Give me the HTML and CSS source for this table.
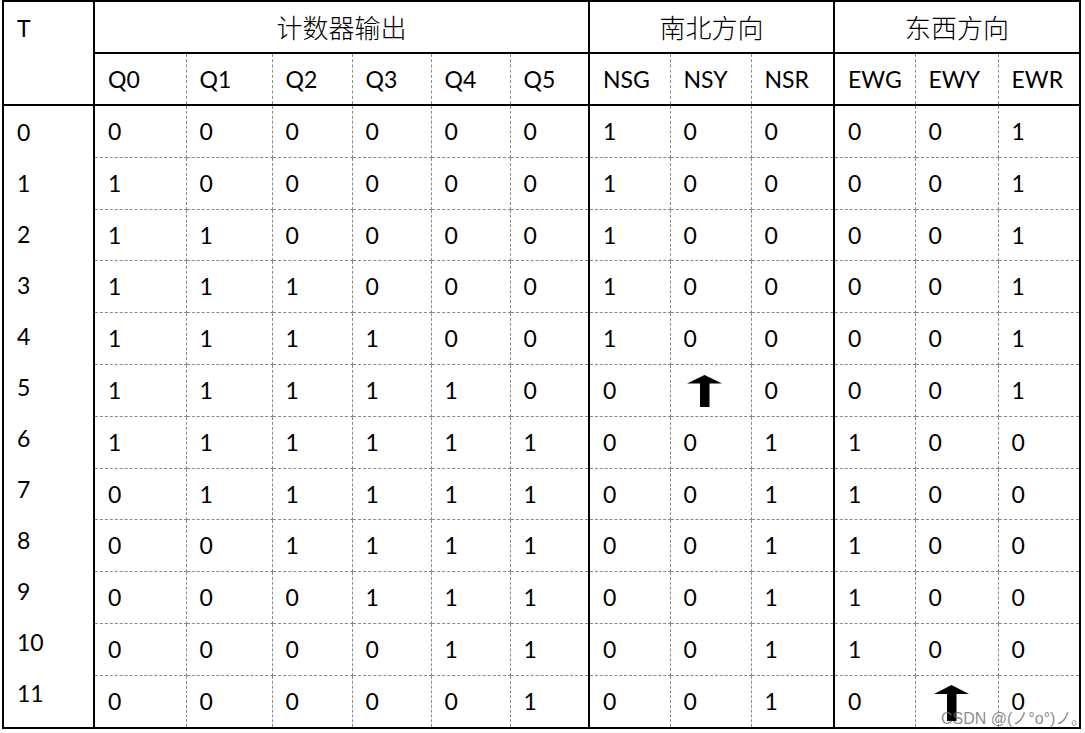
FILE: index.html
```html
<!DOCTYPE html>
<html lang="zh-CN">
<head>
<meta charset="utf-8">
<title>交通灯状态表</title>
<link rel="stylesheet" href="styles.css">
</head>
<body>
<div class="page">
<table class="tt">
  <colgroup>
    <col class="w91"><col class="w92"><col class="w86"><col class="w80"><col class="w79"><col class="w79"><col class="w79">
    <col class="w81"><col class="w81"><col class="w83"><col class="w81"><col class="w83"><col class="w82">
  </colgroup>
  <thead>
    <tr class="h1">
      <th class="tcol thead-t" rowspan="2">T</th>
      <th class="grp" colspan="6">计数器输出</th>
      <th class="grp gs" colspan="3">南北方向</th>
      <th class="grp gs" colspan="3">东西方向</th>
    </tr>
    <tr class="h2">
      <th>Q0</th><th>Q1</th><th>Q2</th><th>Q3</th><th>Q4</th><th>Q5</th>
      <th class="gs">NSG</th><th>NSY</th><th>NSR</th>
      <th class="gs">EWG</th><th>EWY</th><th>EWR</th>
    </tr>
  </thead>
  <tbody>
    <tr class="r52">
      <td class="tcol tlist" rowspan="12">
        <div>0</div><div>1</div><div>2</div><div>3</div><div>4</div><div>5</div>
        <div>6</div><div>7</div><div>8</div><div>9</div><div>10</div><div>11</div>
      </td>
      <td>0</td><td>0</td><td>0</td><td>0</td><td>0</td><td>0</td>
      <td class="gs">1</td><td>0</td><td>0</td>
      <td class="gs">0</td><td>0</td><td>1</td>
    </tr>
    <tr class="r52">
      <td>1</td><td>0</td><td>0</td><td>0</td><td>0</td><td>0</td>
      <td class="gs">1</td><td>0</td><td>0</td>
      <td class="gs">0</td><td>0</td><td>1</td>
    </tr>
    <tr class="r51">
      <td>1</td><td>1</td><td>0</td><td>0</td><td>0</td><td>0</td>
      <td class="gs">1</td><td>0</td><td>0</td>
      <td class="gs">0</td><td>0</td><td>1</td>
    </tr>
    <tr class="r52">
      <td>1</td><td>1</td><td>1</td><td>0</td><td>0</td><td>0</td>
      <td class="gs">1</td><td>0</td><td>0</td>
      <td class="gs">0</td><td>0</td><td>1</td>
    </tr>
    <tr class="r52">
      <td>1</td><td>1</td><td>1</td><td>1</td><td>0</td><td>0</td>
      <td class="gs">1</td><td>0</td><td>0</td>
      <td class="gs">0</td><td>0</td><td>1</td>
    </tr>
    <tr class="r52">
      <td>1</td><td>1</td><td>1</td><td>1</td><td>1</td><td>0</td>
      <td class="gs">0</td>
      <td><svg class="arrow a1" viewBox="0 0 35 32" aria-hidden="true"><polygon points="17.5,0 35,8.5 22.5,8.5 22.5,32 13,32 13,8.5 0,8.5"/></svg></td>
      <td>0</td>
      <td class="gs">0</td><td>0</td><td>1</td>
    </tr>
    <tr class="r52">
      <td>1</td><td>1</td><td>1</td><td>1</td><td>1</td><td>1</td>
      <td class="gs">0</td><td>0</td><td>1</td>
      <td class="gs">1</td><td>0</td><td>0</td>
    </tr>
    <tr class="r51">
      <td>0</td><td>1</td><td>1</td><td>1</td><td>1</td><td>1</td>
      <td class="gs">0</td><td>0</td><td>1</td>
      <td class="gs">1</td><td>0</td><td>0</td>
    </tr>
    <tr class="r52">
      <td>0</td><td>0</td><td>1</td><td>1</td><td>1</td><td>1</td>
      <td class="gs">0</td><td>0</td><td>1</td>
      <td class="gs">1</td><td>0</td><td>0</td>
    </tr>
    <tr class="r52">
      <td>0</td><td>0</td><td>0</td><td>1</td><td>1</td><td>1</td>
      <td class="gs">0</td><td>0</td><td>1</td>
      <td class="gs">1</td><td>0</td><td>0</td>
    </tr>
    <tr class="r52">
      <td>0</td><td>0</td><td>0</td><td>0</td><td>1</td><td>1</td>
      <td class="gs">0</td><td>0</td><td>1</td>
      <td class="gs">1</td><td>0</td><td>0</td>
    </tr>
    <tr class="r52">
      <td>0</td><td>0</td><td>0</td><td>0</td><td>0</td><td>1</td>
      <td class="gs">0</td><td>0</td><td>1</td>
      <td class="gs">0</td>
      <td><svg class="arrow a2" viewBox="0 0 35 36" aria-hidden="true"><polygon points="17.5,0 35,9 22.5,9 22.5,36 13,36 13,9 0,9"/></svg></td>
      <td>0</td>
    </tr>
  </tbody>
</table>
<div class="watermark">CSDN @(ノ°o°)ノ。</div>
</div>
</body>
</html>
```

FILE: styles.css
```css
html, body {
  margin: 0;
  padding: 0;
  background: #fff;
}

.page {
  position: relative;
  width: 1085px;
  height: 733px;
  padding: 0 0 0 2px;
  box-sizing: border-box;
  font-family: Lato, "Open Sans", "Liberation Sans", sans-serif;
  color: #000;
}

.tt {
  border-collapse: collapse;
  table-layout: fixed;
  width: 1079px;
  border: 2px solid #000;
  font-size: 23px;
}

.w91 { width: 91px; }
.w92 { width: 92px; }
.w86 { width: 86px; }
.w80 { width: 80px; }
.w79 { width: 79px; }
.w81 { width: 81px; }
.w82 { width: 82px; }
.w83 { width: 83px; }

.tt th,
.tt td {
  border: 1px dashed #8a8a8a;
  padding: 0 0 0 13px;
  text-align: left;
  font-weight: 400;
  vertical-align: middle;
  line-height: 1;
  white-space: nowrap;
}

.tt .h1 th { height: 50px; }
.tt .h2 th { height: 50px; border-bottom: 2px solid #000; }
.tt .r52 td { height: 51px; }
.tt .r51 td { height: 50px; }

.tt .grp {
  text-align: center;
  padding: 0;
  font-family: "Noto Sans CJK SC", "Noto Sans CJK JP", sans-serif;
  font-weight: 300;
  font-size: 26px;
  border-bottom: 2px solid #000;
}

.tt .gs { border-left: 2px solid #000; }

.tt .tcol {
  border-right: 2px solid #000;
  border-top: 2px solid #000;
}

.tt .thead-t {
  vertical-align: top;
  padding-top: 15px;
  border-bottom: 2px solid #000;
}

.tt .tlist {
  vertical-align: top;
  padding-top: 1px;
  border-bottom: 2px solid #000;
}

.tlist div {
  height: 51px;
  line-height: 51px;
}

.arrow {
  display: block;
  fill: #000;
}

.a1 { width: 35px; height: 32px; margin-left: 3px; }
.a2 { width: 35px; height: 36px; margin-left: 5px; margin-top: 2px; }

.watermark {
  position: absolute;
  left: 941px;
  top: 705px;
  font-family: "Liberation Sans", "Noto Sans CJK SC", sans-serif;
  font-size: 16px;
  color: rgba(110, 110, 110, 0.8);
  white-space: nowrap;
}
```
